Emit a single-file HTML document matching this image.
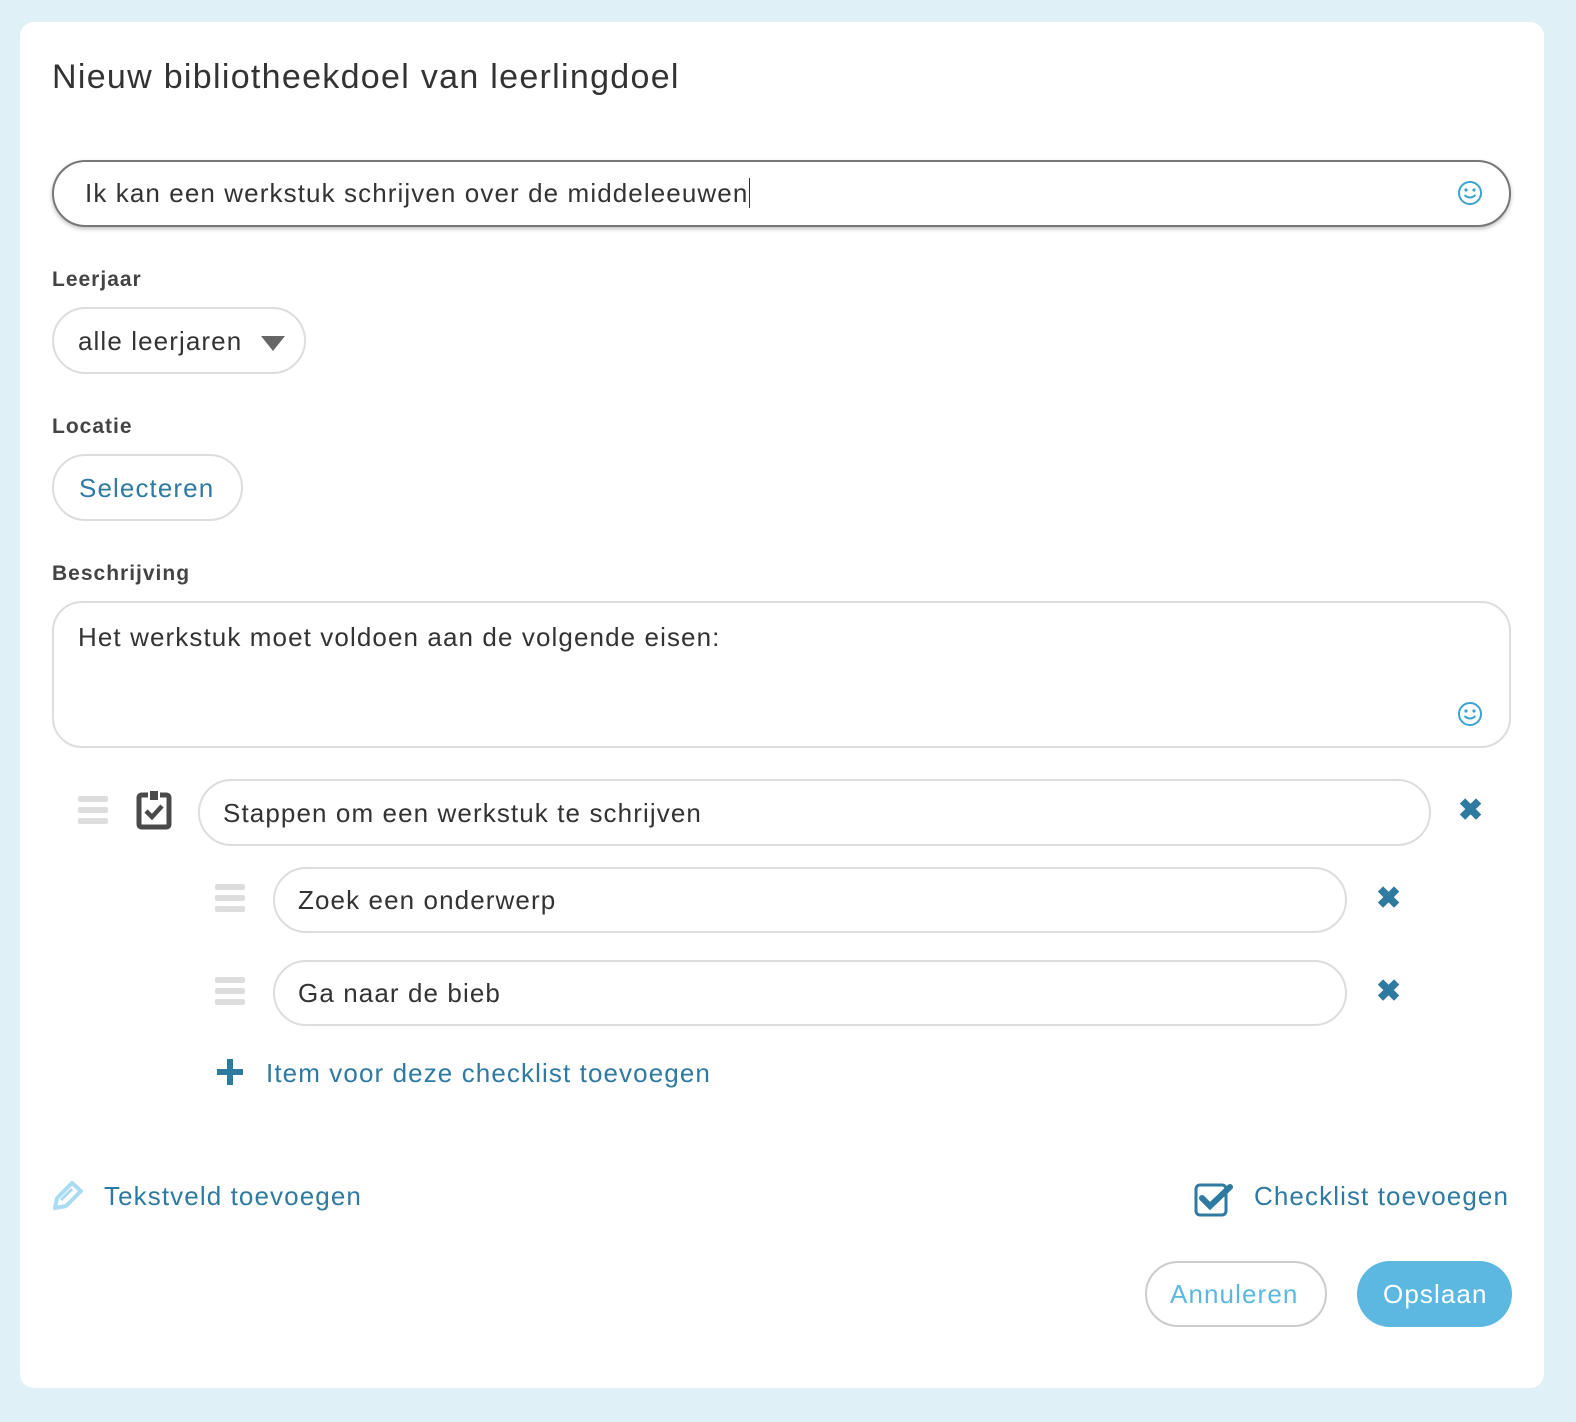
<!DOCTYPE html>
<html><head><meta charset="utf-8"><style>
*{box-sizing:border-box;margin:0;padding:0}
body{width:1576px;height:1422px;background:#dff0f7;font-family:"Liberation Sans",sans-serif;position:relative;overflow:hidden}
.card{position:absolute;left:20px;top:22px;width:1524px;height:1366px;background:#fff;border-radius:14px}
.a{position:absolute}
.t{font-size:26px;color:#333;white-space:nowrap;letter-spacing:1.1px}
.lbl{font-size:21px;font-weight:bold;color:#444;letter-spacing:1px}
.box{position:absolute;border:2px solid #ddd;border-radius:34px;background:#fff}
.link{color:#2f7aa0;font-size:26px}
.x{position:absolute;color:#2f7aa0;font-size:30px;font-weight:bold;line-height:1}
.h{position:absolute;width:30px}
.h i{display:block;height:6px;background:#ddd;border-radius:2px;margin-bottom:5px}
</style></head><body>
<div class="card"></div>
<div class="a" style="left:52px;top:58px;font-size:34px;color:#333;letter-spacing:1.3px">Nieuw bibliotheekdoel van leerlingdoel</div>

<div class="box" style="left:52px;top:160px;width:1459px;height:67px;border-color:#777;box-shadow:0 2px 4px rgba(0,0,0,.25)"></div>
<div class="a t" style="left:85px;top:178px">Ik kan een werkstuk schrijven over de middeleeuwen<span style="border-left:1.5px solid #333;margin-left:1px"></span></div>
<svg class="a" style="left:1457px;top:180px" width="26" height="26" viewBox="0 0 26 26"><circle cx="13" cy="13" r="11" fill="none" stroke="#3ba3d0" stroke-width="2"/><circle cx="9" cy="10" r="1.6" fill="#3ba3d0"/><circle cx="17" cy="10" r="1.6" fill="#3ba3d0"/><path d="M7.5 15 Q13 20 18.5 15" fill="none" stroke="#3ba3d0" stroke-width="2"/></svg>

<div class="a lbl" style="left:52px;top:268px">Leerjaar</div>
<div class="box" style="left:52px;top:307px;width:254px;height:67px"></div>
<div class="a t" style="left:78px;top:326px">alle leerjaren</div>
<div class="a" style="left:261px;top:336px;width:0;height:0;border-left:12px solid transparent;border-right:12px solid transparent;border-top:15px solid #666"></div>

<div class="a lbl" style="left:52px;top:415px">Locatie</div>
<div class="box" style="left:52px;top:454px;width:191px;height:67px"></div>
<div class="a t link" style="left:79px;top:473px">Selecteren</div>

<div class="a lbl" style="left:52px;top:562px">Beschrijving</div>
<div class="box" style="left:52px;top:601px;width:1459px;height:147px;border-radius:30px"></div>
<div class="a t" style="left:78px;top:622px">Het werkstuk moet voldoen aan de volgende eisen:</div>
<svg class="a" style="left:1457px;top:701px" width="26" height="26" viewBox="0 0 26 26"><circle cx="13" cy="13" r="11" fill="none" stroke="#3ba3d0" stroke-width="2"/><circle cx="9" cy="10" r="1.6" fill="#3ba3d0"/><circle cx="17" cy="10" r="1.6" fill="#3ba3d0"/><path d="M7.5 15 Q13 20 18.5 15" fill="none" stroke="#3ba3d0" stroke-width="2"/></svg>

<div class="h" style="left:78px;top:796px"><i></i><i></i><i></i></div>
<svg class="a" style="left:134px;top:790px" width="40" height="40" viewBox="0 0 40 40"><path d="M8 5 H14 M26 5 H32 Q35 5 35 8 V34 Q35 37 32 37 H8 Q5 37 5 34 V8 Q5 5 8 5" fill="none" stroke="#4a4a4a" stroke-width="5"/><rect x="16" y="1" width="8" height="9" fill="#4a4a4a"/><path d="M12 21 L18 27 L28 16" fill="none" stroke="#4a4a4a" stroke-width="4.5"/></svg>
<div class="box" style="left:198px;top:779px;width:1233px;height:67px"></div>
<div class="a t" style="left:223px;top:798px">Stappen om een werkstuk te schrijven</div>
<div class="x" style="left:1458px;top:796px">✖</div>

<div class="h" style="left:215px;top:884px"><i></i><i></i><i></i></div>
<div class="box" style="left:273px;top:867px;width:1074px;height:66px"></div>
<div class="a t" style="left:298px;top:885px">Zoek een onderwerp</div>
<div class="x" style="left:1376px;top:884px">✖</div>

<div class="h" style="left:215px;top:977px"><i></i><i></i><i></i></div>
<div class="box" style="left:273px;top:960px;width:1074px;height:66px"></div>
<div class="a t" style="left:298px;top:978px">Ga naar de bieb</div>
<div class="x" style="left:1376px;top:977px">✖</div>

<svg class="a" style="left:217px;top:1059px" width="26" height="26"><rect x="10" y="0" width="6" height="26" fill="#2f7aa0"/><rect x="0" y="10" width="26" height="6" fill="#2f7aa0"/></svg>
<div class="a t link" style="left:266px;top:1058px">Item voor deze checklist toevoegen</div>

<svg class="a" style="left:52px;top:1180px" width="34" height="30" viewBox="0 0 34 30"><path d="M3 28 L5 18 L20 3 L29 11 L14 26 Z" fill="none" stroke="#a9dcf1" stroke-width="4" stroke-linejoin="round"/><path d="M9 20 L20 9" stroke="#a9dcf1" stroke-width="3"/></svg>
<div class="a t link" style="left:104px;top:1181px">Tekstveld toevoegen</div>

<svg class="a" style="left:1194px;top:1183px" width="42" height="34" viewBox="0 0 42 34"><rect x="2" y="2" width="30" height="30" rx="4" fill="none" stroke="#2f7aa0" stroke-width="3"/><path d="M8 15 L16 23 L36 4" fill="none" stroke="#2f7aa0" stroke-width="6" stroke-linecap="round"/></svg>
<div class="a t link" style="left:1254px;top:1181px">Checklist toevoegen</div>

<div class="box" style="left:1145px;top:1261px;width:182px;height:66px;border-color:#ccc"></div>
<div class="a t" style="left:1170px;top:1279px;color:#5cb8e0">Annuleren</div>
<div class="a" style="left:1357px;top:1261px;width:155px;height:66px;border-radius:34px;background:#5cb8e0"></div>
<div class="a t" style="left:1383px;top:1279px;color:#fff">Opslaan</div>
</body></html>
